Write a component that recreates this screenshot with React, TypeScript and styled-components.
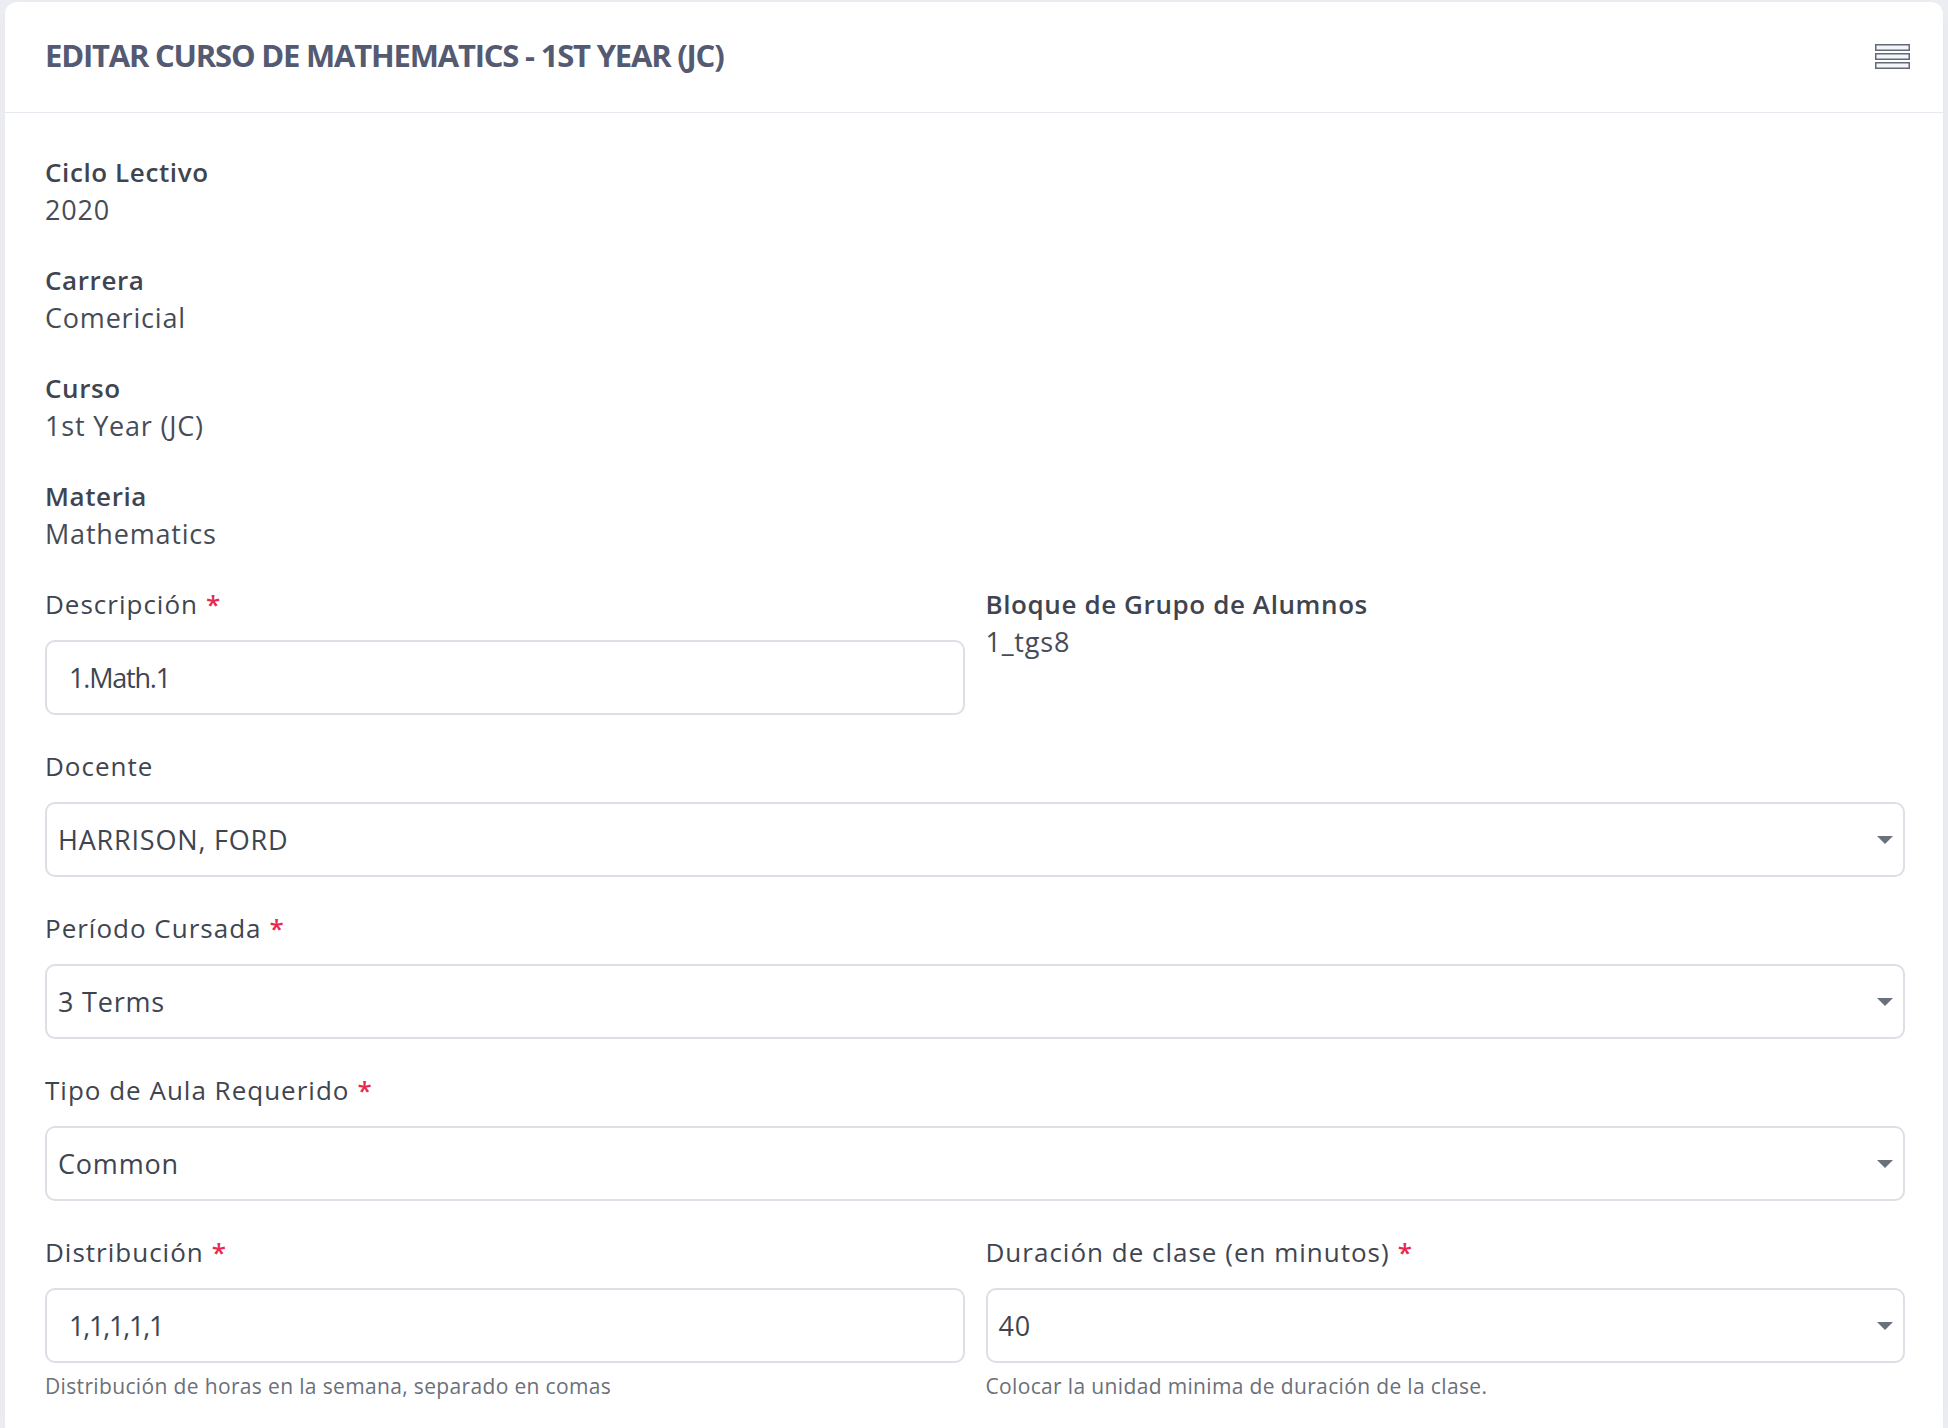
import React from "react";
import styled, { createGlobalStyle } from "styled-components";

const Global = createGlobalStyle`
  html, body { margin: 0; padding: 0; }
  body {
    background: #eef0f5;
    font-family: "Open Sans", "Noto Sans", "DejaVu Sans", sans-serif;
    color: #3f4550;
  }
  * { box-sizing: border-box; }
`;

const Page = styled.div`
  padding: 2px 5px 0 5px;
  min-height: 1428px;
`;

const Card = styled.section`
  background: #ffffff;
  border-radius: 12px 12px 0 0;
  box-shadow: 0 0 24px rgba(82, 63, 105, 0.06);
  min-height: 1426px;
`;

const Header = styled.header`
  height: 111px;
  border-bottom: 1px solid #e7e9f0;
  display: flex;
  align-items: center;
  justify-content: space-between;
  padding: 0 33px 0 40px;
`;

const Title = styled.h3`
  margin: 0 0 5px 0;
  font-size: 31px;
  font-weight: 700;
  text-transform: uppercase;
  color: #535a72;
  letter-spacing: -1.2px;
`;

const MenuButton = styled.button`
  border: 0;
  background: transparent;
  padding: 0;
  width: 36px;
  height: 28px;
  display: flex;
  align-items: center;
  justify-content: center;
  cursor: pointer;
`;

const Body = styled.div`
  padding: 41px 38px 0 40px;
`;

const Info = styled.dl`
  margin: 0;
`;

const InfoItem = styled.div`
  margin-bottom: 34px;
`;

const Term = styled.dt`
  font-size: 26px;
  line-height: 37px;
  font-weight: 600;
  color: #3f4550;
  letter-spacing: 0.6px;
`;

const Value = styled.dd`
  margin: 0;
  font-size: 27px;
  line-height: 37px;
  font-weight: 400;
  color: #464c56;
  letter-spacing: 0.8px;
`;

const Row = styled.div<{ $cols?: number }>`
  display: grid;
  grid-template-columns: ${(p) => (p.$cols === 2 ? "1fr 1fr" : "1fr")};
  column-gap: 21px;
`;

const Group = styled.div`
  margin-bottom: 33px;
`;

const Label = styled.label`
  display: block;
  font-size: 26px;
  line-height: 37px;
  font-weight: 400;
  color: #3f4550;
  margin-bottom: 17px;
  letter-spacing: 1px;
`;

const Required = styled.span`
  color: #e8294f;
  margin-left: 8px;
  font-weight: 600;
`;

const TextInput = styled.input`
  display: block;
  width: 100%;
  height: 75px;
  border: 2px solid #dcdfe5;
  border-radius: 10px;
  padding: 0 22px;
  font-family: inherit;
  font-size: 27px;
  color: #3f4550;
  background: #fff;
  outline: none;
  letter-spacing: -1.2px;
`;

const SelectBox = styled.div`
  height: 75px;
  border: 2px solid #dcdfe5;
  border-radius: 10px;
  padding: 0 10px 0 11px;
  display: flex;
  align-items: center;
  justify-content: space-between;
  font-size: 27px;
  color: #3f4550;
  letter-spacing: 0.8px;
  cursor: pointer;
`;

const Help = styled.div`
  margin-top: 8px;
  font-size: 21px;
  line-height: 30px;
  color: #6b7079;
  letter-spacing: 0.35px;
`;

const Caret = () => (
  <svg width="16" height="8" viewBox="0 0 16 8" aria-hidden="true">
    <path d="M0 0 H16 L8 8 Z" fill="#6b717c" />
  </svg>
);

const Bars = () => (
  <svg width="35" height="26" viewBox="0 0 35 26" aria-hidden="true">
    {[0.75, 9.75, 18.75].map((y) => (
      <rect key={y} x="0.75" y={y} width="33.5" height="5.5" fill="#f4f5f8" stroke="#636a77" strokeWidth="1.5" />
    ))}
  </svg>
);

const Select = ({ value }: { value: string }) => (
  <SelectBox role="combobox">
    <span>{value}</span>
    <Caret />
  </SelectBox>
);

const infos = [
  ["Ciclo Lectivo", "2020"],
  ["Carrera", "Comericial"],
  ["Curso", "1st Year (JC)"],
  ["Materia", "Mathematics"],
];

export default function App() {
  return (
    <>
      <Global />
      <Page>
        <Card>
          <Header>
            <Title>Editar curso de Mathematics - 1st Year (JC)</Title>
            <MenuButton aria-label="menu">
              <Bars />
            </MenuButton>
          </Header>
          <Body>
            <Info>
              {infos.map(([t, v]) => (
                <InfoItem key={t}>
                  <Term>{t}</Term>
                  <Value>{v}</Value>
                </InfoItem>
              ))}
            </Info>
            <Row $cols={2}>
              <Group>
                <Label>
                  Descripción<Required>*</Required>
                </Label>
                <TextInput readOnly value="1.Math.1" />
              </Group>
              <Group>
                <Info>
                  <Term>Bloque de Grupo de Alumnos</Term>
                  <Value>1_tgs8</Value>
                </Info>
              </Group>
            </Row>
            <Row>
              <Group>
                <Label>Docente</Label>
                <Select value="HARRISON, FORD" />
              </Group>
            </Row>
            <Row>
              <Group>
                <Label>
                  Período Cursada<Required>*</Required>
                </Label>
                <Select value="3 Terms" />
              </Group>
            </Row>
            <Row>
              <Group>
                <Label>
                  Tipo de Aula Requerido<Required>*</Required>
                </Label>
                <Select value="Common" />
              </Group>
            </Row>
            <Row $cols={2}>
              <Group>
                <Label>
                  Distribución<Required>*</Required>
                </Label>
                <TextInput readOnly value="1,1,1,1,1" />
                <Help>Distribución de horas en la semana, separado en comas</Help>
              </Group>
              <Group>
                <Label>
                  Duración de clase (en minutos)<Required>*</Required>
                </Label>
                <Select value="40" />
                <Help>Colocar la unidad minima de duración de la clase.</Help>
              </Group>
            </Row>
          </Body>
        </Card>
      </Page>
    </>
  );
}
